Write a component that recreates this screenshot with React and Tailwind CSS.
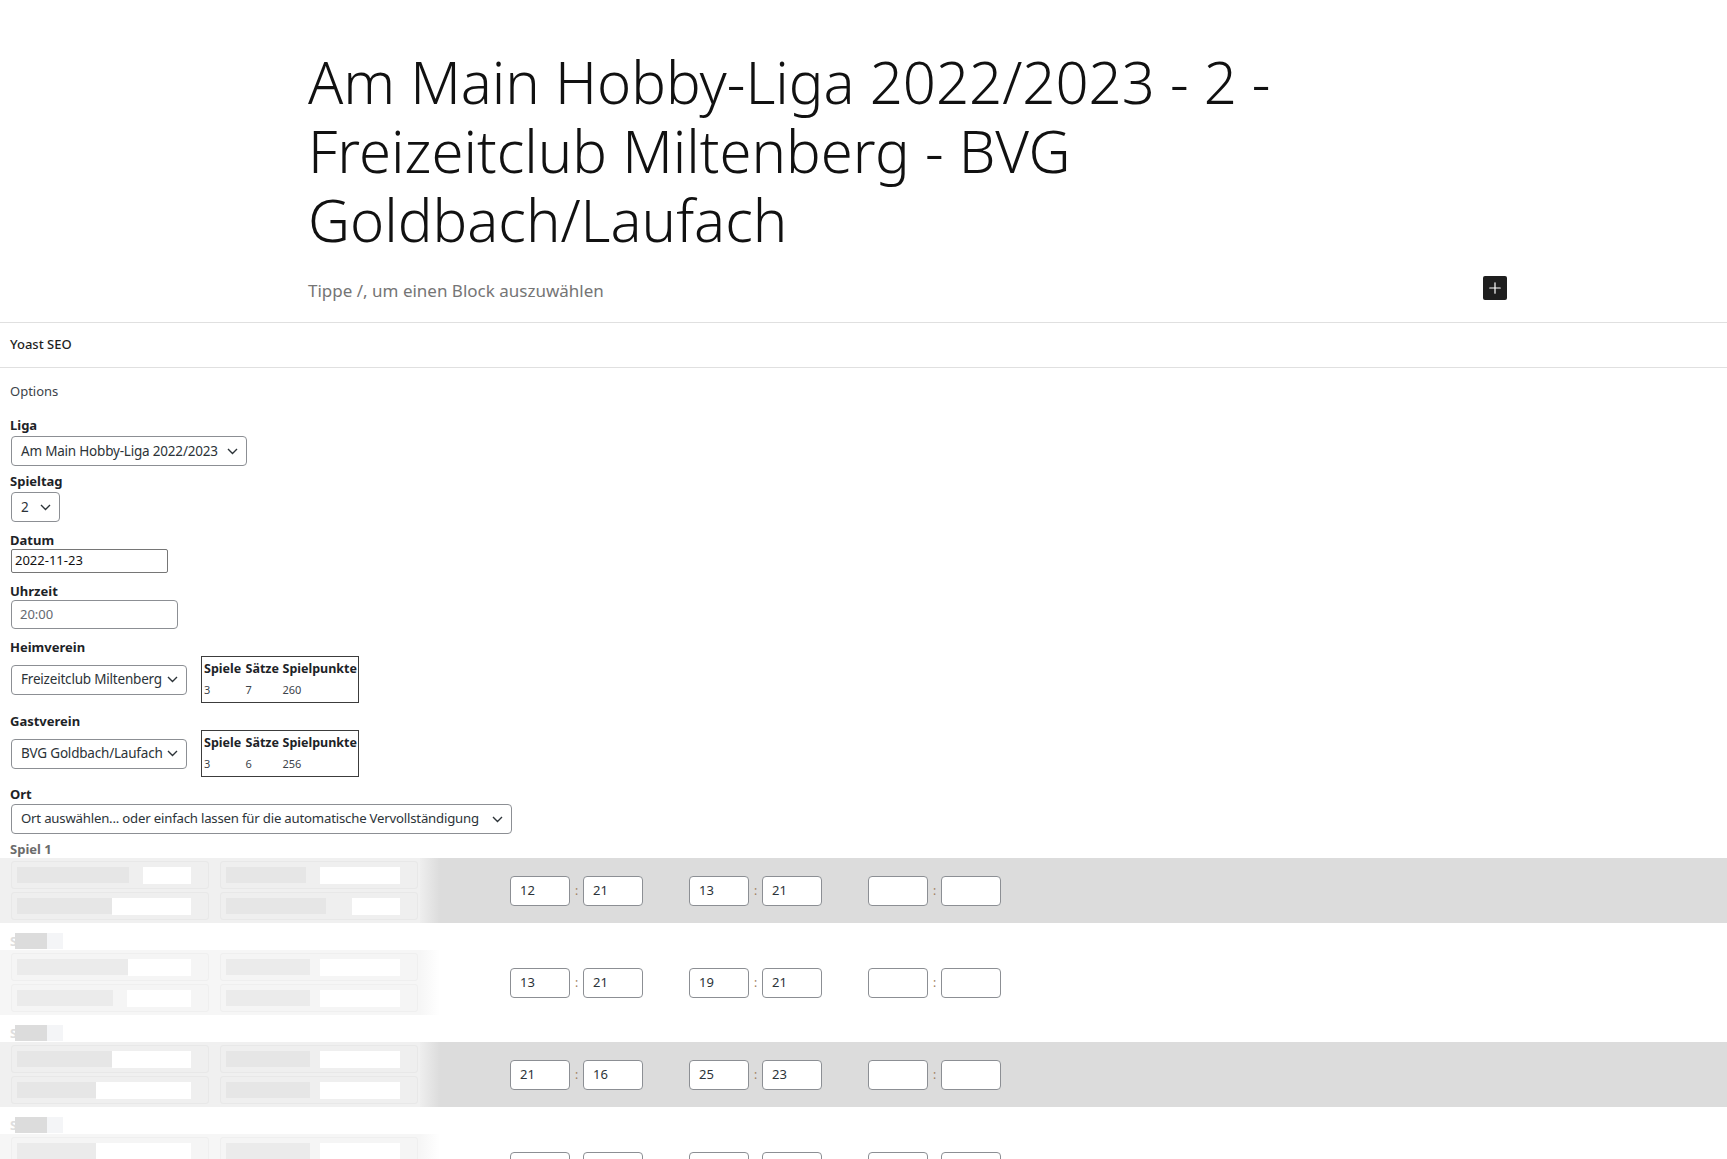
import { Plus } from 'lucide-react'

const games = [
  { n: 1, band: true, scores: [['12', '21'], ['13', '21'], ['', '']], boxes: [[112, 48], [96, 80], [80, 80], [100, 48]] },
  { n: 2, band: false, scores: [['13', '21'], ['19', '21'], ['', '']], boxes: [[112, 64], [96, 64], [84, 80], [84, 80]] },
  { n: 3, band: true, scores: [['21', '16'], ['25', '23'], ['', '']], boxes: [[96, 80], [80, 96], [84, 80], [84, 80]] },
  { n: 4, band: false, scores: [['', ''], ['', ''], ['', '']], boxes: [[80, 96], [96, 64], [84, 80], [84, 80]] }
]

function Chevron() {
  return (
    <svg width="11" height="7" viewBox="0 0 11 7" fill="none" className="shrink-0">
      <path d="M1 1l4.5 4.5L10 1" stroke="#2c3338" strokeWidth="1.4" />
    </svg>
  )
}

function Select({ value, width, size = 'text-[13.5px]' }) {
  return (
    <div
      className={`flex h-[30px] items-center justify-between gap-[4px] overflow-hidden rounded-[4px] border border-[#8c8f94] bg-white pl-[9px] pr-[8px] tracking-[-0.2px] text-[#2c3338] ${size} ${width}`}
    >
      <span className="whitespace-nowrap">{value}</span>
      <Chevron />
    </div>
  )
}

function Label({ children }) {
  return <div className="text-[13px] font-bold leading-[17px] text-[#1d2327]">{children}</div>
}

function StatsTable({ games, sets, points }) {
  return (
    <table className="ml-[14px] w-[158px] border-collapse border border-[#3c3c3c] text-left">
      <thead>
        <tr className="h-[25px] text-[12.5px] font-bold text-[#1d2327]">
          <th className="w-[44px] pl-[2px] pt-[3px] align-top">Spiele</th>
          <th className="w-[37px] pt-[3px] align-top">Sätze</th>
          <th className="pt-[3px] align-top">Spielpunkte</th>
        </tr>
      </thead>
      <tbody>
        <tr className="h-[21px] text-[11px] text-[#3c434a]">
          <td className="pl-[2px] align-top">{games}</td>
          <td className="align-top">{sets}</td>
          <td className="align-top">{points}</td>
        </tr>
      </tbody>
    </table>
  )
}

function BlurBox({ grey, white, band }) {
  return (
    <div
      className={`flex h-[28px] w-[198px] items-center rounded-[3px] border pl-[5px] pr-[17px] ${
        band ? 'border-[#e8e8e8] bg-[#efefef]' : 'border-[#efefef] bg-[#f5f5f5]'
      }`}
    >
      <div className={`h-[16px] ${band ? 'bg-[#e6e6e6]' : 'bg-[#ebebeb]'}`} style={{ width: grey }} />
      <div className="flex-1" />
      <div className="h-[17px] bg-white" style={{ width: white }} />
    </div>
  )
}

function ScoreInput({ value }) {
  return (
    <div className="flex h-[30px] w-[60px] items-center rounded-[4px] border border-[#8c8f94] bg-white pl-[9px] text-[13px] text-[#2c3338]">
      {value}
    </div>
  )
}

function GameRow({ game }) {
  const [b1, b2, b3, b4] = game.boxes
  const first = game.n === 1
  return (
    <div>
      <div
        className={`px-[10px] text-[13px] font-bold leading-[18px] ${first ? 'h-[24px] pt-[6px]' : 'h-[27px] pt-[9px]'}`}
      >
        {first ? (
          <span className="text-[#6b6b6b]">Spiel 1</span>
        ) : (
          <span className="flex items-center">
            <span className="text-[#dedede]">S</span>
            <span className="ml-[-2px] h-[16px] w-[32px] bg-[#dcdcdc]" />
            <span className="h-[16px] w-[16px] bg-[#f4f5f7]" />
          </span>
        )}
      </div>
      <div className={`flex h-[65px] items-center ${game.band ? 'bg-[#dcdcdc]' : 'bg-white'}`}>
        <div
          className={`flex h-full w-[420px] items-center gap-[11px] pl-[11px] ${
            game.band ? 'bg-[#f0f0f0]' : 'bg-[#f6f6f6]'
          }`}
        >
          <div className="flex flex-col gap-[3px]">
            <BlurBox band={game.band} grey={b1[0]} white={b1[1]} />
            <BlurBox band={game.band} grey={b2[0]} white={b2[1]} />
          </div>
          <div className="flex flex-col gap-[3px]">
            <BlurBox band={game.band} grey={b3[0]} white={b3[1]} />
            <BlurBox band={game.band} grey={b4[0]} white={b4[1]} />
          </div>
        </div>
        <div
          className={`h-full w-[20px] bg-gradient-to-r ${
            game.band ? 'from-[#eeeeee] to-[#dcdcdc]' : 'from-[#f6f6f6] to-white'
          }`}
        />
        <div className="ml-[70px] flex items-center gap-[46px]">
          {game.scores.map((s, i) => (
            <div key={i} className="flex items-center">
              <ScoreInput value={s[0]} />
              <span className="w-[13px] text-center text-[12px] text-[#a08060]">:</span>
              <ScoreInput value={s[1]} />
            </div>
          ))}
        </div>
      </div>
    </div>
  )
}

export default function App() {
  return (
    <div className="min-h-screen overflow-hidden bg-white font-['Noto_Sans',sans-serif] text-[#1e1e1e]">
      {/* TITLE */}
      <div className="pl-[308px] pt-[47px]">
        <h1 className="w-[1180px] text-[58px] font-light leading-[69px] text-[#111]">
          Am Main Hobby-Liga 2022/2023 - 2 - Freizeitclub Miltenberg - BVG Goldbach/Laufach
        </h1>
        <div className="mt-[22px] flex h-[24px] w-[1199px] items-start justify-between">
          <p className="pt-[6px] text-[17px] leading-[18px] text-[#757575]">Tippe /, um einen Block auszuwählen</p>
          <button className="flex h-[24px] w-[24px] items-center justify-center rounded-[2px] bg-[#1e1e1e] text-white">
            <Plus size={18} strokeWidth={1.6} />
          </button>
        </div>
      </div>

      {/* YOAST */}
      <div className="mt-[22px] border-t border-[#e0e0e0]">
        <div className="flex h-[44px] items-center px-[10px] text-[13px] font-medium text-[#1e1e1e]">Yoast SEO</div>
      </div>

      {/* OPTIONS */}
      <div className="border-t border-[#e0e0e0]">
        <div className="px-[10px] pt-[14px] text-[13px] leading-[18px] text-[#3c434a]">Options</div>

        <div className="mt-[17px] px-[10px]">
          <Label>Liga</Label>
          <div className="ml-px mt-[2px]">
            <Select value="Am Main Hobby-Liga 2022/2023" width="w-[236px]" />
          </div>

          <div className="mt-[7px]">
            <Label>Spieltag</Label>
            <div className="ml-px mt-[2px]">
              <Select value="2" width="w-[49px] h-[29px]" />
            </div>
          </div>

          <div className="mt-[10px]">
            <Label>Datum</Label>
            <div className="ml-px flex h-[24px] w-[157px] items-center rounded-[2px] border border-[#767676] pl-[3px] text-[13px] text-[#111]">
              2022-11-23
            </div>
          </div>

          <div className="mt-[10px]">
            <Label>Uhrzeit</Label>
            <div className="ml-px flex h-[29px] w-[167px] items-center rounded-[4px] border border-[#8c8f94] pl-[8px] text-[13px] text-[#646970]">
              20:00
            </div>
          </div>

          <div className="mt-[10px]">
            <Label>Heimverein</Label>
            <div className="ml-px flex items-center">
              <Select value="Freizeitclub Miltenberg" width="w-[176px] h-[29px]" />
              <StatsTable games="3" sets="7" points="260" />
            </div>
          </div>

          <div className="mt-[10px]">
            <Label>Gastverein</Label>
            <div className="ml-px flex items-center">
              <Select value="BVG Goldbach/Laufach" width="w-[176px] h-[29px]" />
              <StatsTable games="3" sets="6" points="256" />
            </div>
          </div>

          <div className="mt-[9px]">
            <Label>Ort</Label>
            <div className="ml-px mt-px">
              <Select
                value="Ort auswählen... oder einfach lassen für die automatische Vervollständigung"
                width="w-[501px]"
                size="text-[13.2px]"
              />
            </div>
          </div>
        </div>

        {/* SPIELE */}
        <div>
          {games.map((g) => (
            <GameRow key={g.n} game={g} />
          ))}
        </div>
      </div>
    </div>
  )
}
